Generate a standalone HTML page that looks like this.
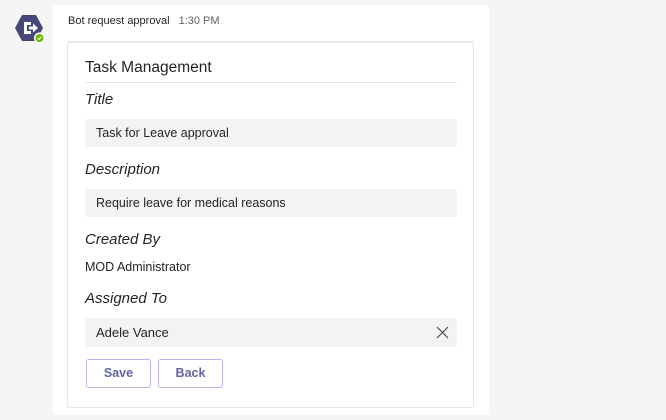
<!DOCTYPE html>
<html><head><style>
body{margin:0;width:666px;height:420px;background:#f5f5f5;font-family:"Liberation Sans",sans-serif;position:relative;overflow:hidden;color:#252423}
.a{position:absolute}
.outer{left:53px;top:5px;width:436px;height:410px;background:#fff;border-radius:4px}
.inner{left:67px;top:41px;width:405px;height:364px;background:#fff;border:1px solid #e6e6e6;border-top:2px solid #e6e6e6;border-radius:2px}
.lbl{font-style:italic;font-size:15px;left:85px}
.fld{left:85px;width:372px;background:#f3f3f3;border-radius:3px;font-size:12.5px;line-height:28px;text-indent:11px}
.btn{top:359px;width:63px;height:27px;border:1px solid #b3b4f0;border-radius:3px;color:#6264a7;font-size:12.5px;font-weight:bold;text-align:center;line-height:27px;background:#fff}
</style></head><body>
<svg class="a" style="left:14px;top:13px" width="34" height="32" viewBox="0 0 34 32">
<polygon points="8,2 22,2 29,15 22,28 8,28 1,15" fill="#464775"/>
<path d="M10 9h7v3h-4v6h4v3h-7z" fill="#fff"/><path d="M15 13.5h4v-3l5 4.5-5 4.5v-3h-4z" fill="#fff"/>
<circle cx="25.5" cy="25" r="5.5" fill="#fff"/><circle cx="25.5" cy="25" r="4" fill="#6bb700"/>
<path d="M23.7 25l1.3 1.3 2.3-2.5" stroke="#fff" stroke-width="1.1" fill="none"/>
</svg>
<div class="a outer"></div>
<div class="a" style="left:68px;top:15px;font-size:11px">Bot request approval <span style="color:#616161;margin-left:6px">1:30 PM</span></div>
<div class="a inner"></div>
<div class="a" style="left:85px;top:59px;font-size:15.5px">Task Management</div>
<div class="a" style="left:85px;top:82px;width:372px;height:1px;background:#e6e6e6"></div>
<div class="a lbl" style="top:91px">Title</div>
<div class="a fld" style="top:119px;height:28px">Task for Leave approval</div>
<div class="a lbl" style="top:161px">Description</div>
<div class="a fld" style="top:189px;height:28px">Require leave for medical reasons</div>
<div class="a lbl" style="top:231px">Created By</div>
<div class="a" style="left:85px;top:260px;font-size:12.5px">MOD Administrator</div>
<div class="a lbl" style="top:290px">Assigned To</div>
<div class="a fld" style="top:318px;height:29px;line-height:29px;font-size:13px">Adele Vance</div>
<svg class="a" style="left:436px;top:326px" width="13" height="13"><path d="M1 1L12 12M12 1L1 12" stroke="#444" stroke-width="1.1"/></svg>
<div class="a btn" style="left:86px">Save</div>
<div class="a btn" style="left:158px">Back</div>
</body></html>
